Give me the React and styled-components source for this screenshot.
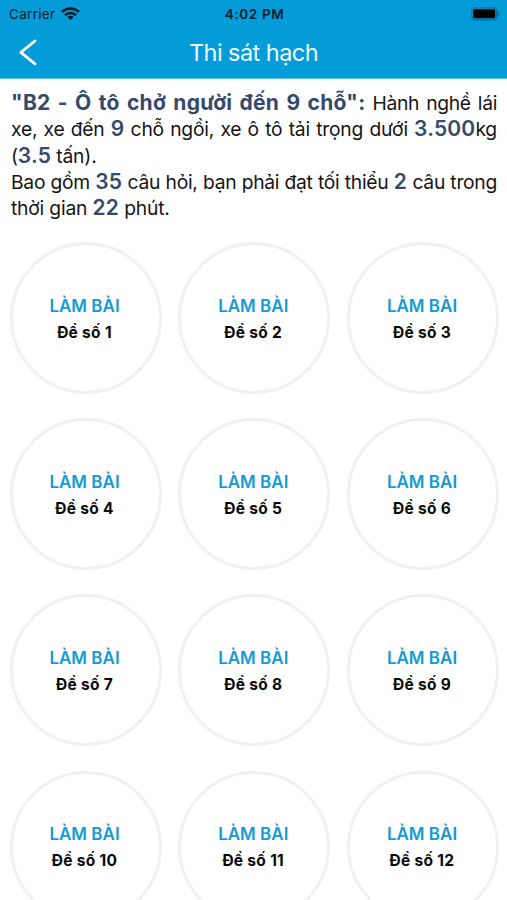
import React from 'react'
import styled, { createGlobalStyle } from 'styled-components'

const GlobalStyle = createGlobalStyle`
  * { box-sizing: border-box; }
  body {
    margin: 0;
    background: #fff;
    font-family: Inter, "Liberation Sans", sans-serif;
  }
`;

const Screen = styled.div`
  height: 900px;
  overflow: hidden;
  background: #fff;
`;

const Header = styled.header`
  height: 79px;
  background: #049bd9;
  border-bottom: 1px solid #58bde8;
`;

const StatusBar = styled.div`
  display: grid;
  grid-template-columns: 1fr auto 1fr;
  align-items: center;
  height: 27px;
  padding: 0 7px 0 9px;
  color: #07202d;
`;

const Carrier = styled.div`
  display: flex;
  align-items: center;
  gap: 6px;
  font-size: 13.5px;
  letter-spacing: 0.3px;
`;

const Clock = styled.div`
  font-size: 13.5px;
  font-weight: 600;
  letter-spacing: 0.65px;
`;

const Battery = styled.svg`
  justify-self: end;
`;

const NavBar = styled.div`
  display: grid;
  grid-template-columns: 60px 1fr 60px;
  align-items: center;
  height: 51px;
`;

const BackButton = styled.button`
  display: flex;
  padding: 0 0 0 18px;
  border: 0;
  background: none;
`;

const Title = styled.h1`
  margin: 0;
  color: #f0faff;
  font-size: 23.5px;
  font-weight: 400;
  line-height: 28px;
  letter-spacing: -0.55px;
  text-align: center;
`;

const Intro = styled.section`
  padding: 11px 10px 0 11px;
  color: #151515;
`;

const Line = styled.div`
  height: 26.3px;
  font-size: 19.3px;
  line-height: 26.3px;
  letter-spacing: ${({ $spacing }) => $spacing || '-0.2px'};
  white-space: nowrap;
  text-align-last: ${({ $justify }) => ($justify ? 'justify' : 'left')};
`;

const Strong = styled.b`
  color: #354a6b;
  font-size: 21px;
  font-weight: ${({ $wide }) => ($wide ? 700 : 600)};
  line-height: 1;
  letter-spacing: ${({ $wide }) => ($wide ? '0.3px' : '0.2px')};
`;

const Grid = styled.div`
  display: grid;
  grid-template-columns: repeat(3, 152px);
  justify-content: space-between;
  row-gap: 24.2px;
  padding: 20.5px 8px 0 9.5px;
`;

const Exam = styled.div`
  display: flex;
  flex-direction: column;
  align-items: center;
  justify-content: center;
  height: 152px;
  padding: 2.4px 2px 0 0;
  border: 3px solid #f1f1f1;
  border-radius: 50%;
`;

const Action = styled.div`
  color: #119bd7;
  font-size: 17px;
  font-weight: 600;
  line-height: 26px;
`;

const ExamName = styled.div`
  color: #080808;
  font-size: 15.5px;
  font-weight: 700;
  line-height: 27px;
  letter-spacing: 0.3px;
`;

const exams = Array.from({ length: 12 }, (_, i) => i + 1);

const App = () => {
  return (
    <Screen>
      <GlobalStyle />
      <Header>
        <StatusBar>
          <Carrier>
            <span>Carrier</span>
            <svg width="19" height="14" viewBox="0 0 19 14" fill="none" stroke="#07161e" strokeWidth="2.6">
              <path d="M1 4.9C5.8 0.3 13.2 0.3 18 4.9" />
              <path d="M4 8.1C7.1 5.2 11.9 5.2 15 8.1" />
              <path d="M9.5 13L6.4 10C8.2 8.4 10.8 8.4 12.6 10Z" fill="#07161e" stroke="none" />
            </svg>
          </Carrier>
          <Clock>4:02 PM</Clock>
          <Battery width="30" height="14" viewBox="0 0 30 14">
            <rect x="1.7" y="0.8" width="25" height="12" rx="3.5" fill="none" stroke="#066c98" strokeWidth="1.3" />
            <rect x="3.2" y="2.3" width="22" height="9" rx="1.6" fill="#000" />
            <path d="M27.7 4.6C29.8 5.4 29.8 8.2 27.7 9Z" fill="#066c98" />
          </Battery>
        </StatusBar>
        <NavBar>
          <BackButton aria-label="Back">
            <svg width="20" height="28" viewBox="0 0 20 28" fill="none" stroke="#fff" strokeWidth="2.8" strokeLinecap="round" strokeLinejoin="round">
              <path d="M17 2L2.8 13.4L17 24.8" />
            </svg>
          </BackButton>
          <Title>Thi sát hạch</Title>
        </NavBar>
      </Header>

      <Intro>
        <Line $justify $spacing="-0.32px"><Strong $wide>"B2 - Ô tô chở người đến 9 chỗ":</Strong> Hành nghề lái</Line>
        <Line $justify>xe, xe đến <Strong>9</Strong> chỗ ngồi, xe ô tô tải trọng dưới <Strong>3.500</Strong>kg</Line>
        <Line>(<Strong>3.5</Strong> tấn).</Line>
        <Line $justify $spacing="-0.28px">Bao gồm <Strong>35</Strong> câu hỏi, bạn phải đạt tối thiểu <Strong>2</Strong> câu trong</Line>
        <Line>thời gian <Strong>22</Strong> phút.</Line>
      </Intro>

      <Grid>
        {exams.map((n) => (
          <Exam key={n}>
            <Action>LÀM BÀI</Action>
            <ExamName>Đề số {n}</ExamName>
          </Exam>
        ))}
      </Grid>
    </Screen>
  )
}

export default App
